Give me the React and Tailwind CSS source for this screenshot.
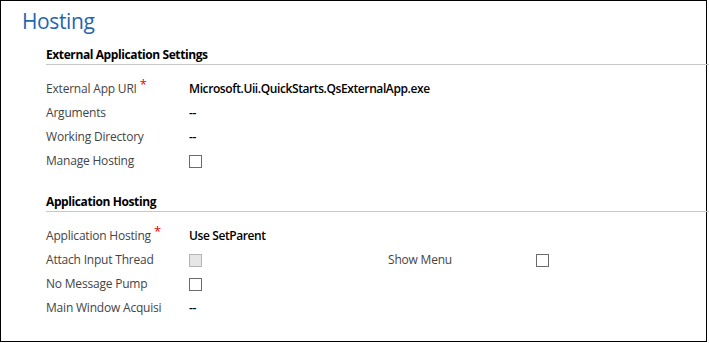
import React from "react";

const font = { fontFamily: '"Open Sans", "Noto Sans", sans-serif' };

function Req() {
  return <span className="text-[#e00] text-[13px] relative top-[-4px] ml-[3px]">*</span>;
}

function Box({ disabled }) {
  return (
    <div
      className={
        disabled
          ? "w-[13px] h-[13px] border border-[#b4b4b4] bg-[#e6e6e6]"
          : "w-[13px] h-[13px] border border-[#6b6b6b] bg-white"
      }
    />
  );
}

function Row({ label, req, children, right }) {
  return (
    <div className="flex h-[24px] items-center">
      <div className="w-[143px] text-[#444] text-[12px] tracking-[-0.2px] flex items-center whitespace-nowrap">
        {label}
        {req && <Req />}
      </div>
      <div className="w-[199px] flex items-center text-[12px] font-semibold text-black tracking-[-0.4px] whitespace-nowrap">
        {children}
      </div>
      {right && (
        <>
          <div className="w-[148px] text-[#444] text-[12px] tracking-[-0.2px]">{right.label}</div>
          <div className="flex items-center">{right.value}</div>
        </>
      )}
    </div>
  );
}

function Section({ title, children }) {
  return (
    <div>
      <div className="text-[12px] font-bold text-black tracking-[-0.4px] leading-[16px]">{title}</div>
      <div className="h-px bg-[#c8c8c8] mt-[1px] mr-[-4px]" />
      <div className="mt-[12px]">{children}</div>
    </div>
  );
}

export default function App() {
  return (
    <div className="bg-white w-[709px] h-[343px]" style={font}>
      <div className="w-[707px] h-[342px] border border-black bg-white">
        <div className="pl-[21px] pt-[6px] text-[21px] leading-[28px] text-[#1f66b2] font-normal tracking-[-0.4px]">Hosting</div>
        <div className="pl-[45px] pt-[12px]">
          <Section title="External Application Settings">
            <Row label="External App URI" req>Microsoft.Uii.QuickStarts.QsExternalApp.exe</Row>
            <Row label="Arguments">--</Row>
            <Row label="Working Directory">--</Row>
            <Row label="Manage Hosting"><Box /></Row>
          </Section>
          <div className="h-[21px]" />
          <Section title="Application Hosting">
            <Row label="Application Hosting" req>Use SetParent</Row>
            <Row label="Attach Input Thread" right={{ label: "Show Menu", value: <Box /> }}><Box disabled /></Row>
            <Row label="No Message Pump"><Box /></Row>
            <Row label="Main Window Acquisi">--</Row>
          </Section>
        </div>
      </div>
    </div>
  );
}
